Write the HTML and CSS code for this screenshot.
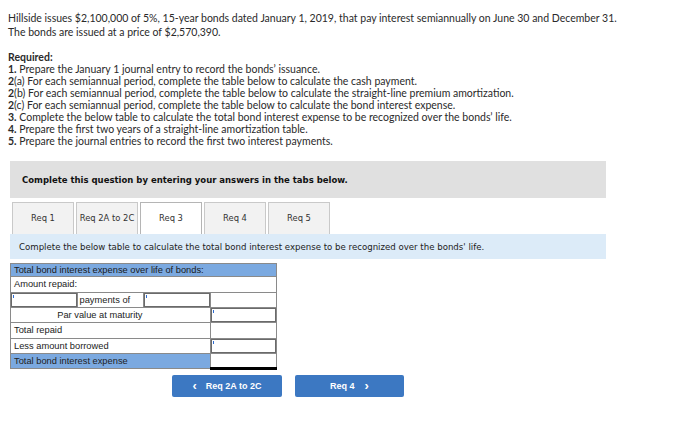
FILE: index.html
```html
<!DOCTYPE html>
<html>
<head>
<meta charset="utf-8">
<link rel="stylesheet" href="styles.css">
</head>
<body>
<div class="page">
  <p class="intro">Hillside issues $2,100,000 of 5%, 15-year bonds dated January 1, 2019, that pay interest semiannually on June 30 and December 31.<br>The bonds are issued at a price of $2,570,390.</p>
  <div class="req">
    <div class="req-title">Required:</div>
    <div><b>1.</b> Prepare the January 1 journal entry to record the bonds’ issuance.</div>
    <div><b>2</b>(a) For each semiannual period, complete the table below to calculate the cash payment.</div>
    <div><b>2</b>(b) For each semiannual period, complete the table below to calculate the straight-line premium amortization.</div>
    <div><b>2</b>(c) For each semiannual period, complete the table below to calculate the bond interest expense.</div>
    <div><b>3.</b> Complete the below table to calculate the total bond interest expense to be recognized over the bonds’ life.</div>
    <div><b>4.</b> Prepare the first two years of a straight-line amortization table.</div>
    <div><b>5.</b> Prepare the journal entries to record the first two interest payments.</div>
  </div>

  <div class="instr">Complete this question by entering your answers in the tabs below.</div>

  <div class="tabs">
    <div class="tab">Req 1</div>
    <div class="tab">Req 2A to 2C</div>
    <div class="tab active">Req 3</div>
    <div class="tab">Req 4</div>
    <div class="tab">Req 5</div>
  </div>
  <div class="info">Complete the below table to calculate the total bond interest expense to be recognized over the bonds' life.</div>

  <table class="grid">
    <tr class="hdr"><td colspan="4">Total bond interest expense over life of bonds:</td></tr>
    <tr class="tall"><td colspan="4">Amount repaid:</td></tr>
    <tr>
      <td class="inp"><span class="box"></span></td>
      <td class="mid">payments of</td>
      <td class="inp"><span class="box"></span></td>
      <td class="val"></td>
    </tr>
    <tr>
      <td colspan="2" class="right">Par value at maturity</td>
      <td class="blank"></td>
      <td class="inp"><span class="box"></span></td>
    </tr>
    <tr class="tall"><td colspan="3">Total repaid</td><td class="val sum"></td></tr>
    <tr><td colspan="3">Less amount borrowed</td><td class="inp"><span class="box"></span></td></tr>
    <tr class="total"><td colspan="3">Total bond interest expense</td><td class="val grand"></td></tr>
  </table>

  <div class="nav">
    <button class="btn prev"><span class="chev">&lsaquo;</span>Req 2A to 2C</button>
    <button class="btn next">Req 4<span class="chev">&rsaquo;</span></button>
  </div>
</div>
</body>
</html>
```
FILE: styles.css
```css
* { box-sizing: border-box; }
body { margin: 0; background: #fff; }
.page {
  padding: 11px 0 0 8px;
  font-family: Lato, "Open Sans", sans-serif;
  color: #2a2a2a;
}
.intro {
  margin: 0;
  font-size: 10.5px;
  line-height: 14px;
}
.req {
  margin-top: 12px;
  font-size: 10.5px;
  line-height: 12px;
}
.req-title { font-weight: bold; }
.req b { font-weight: bold; }

.instr {
  margin: 14px 0 0 2px;
  width: 596px;
  height: 37px;
  background: #e0e0e0;
  font-family: "DejaVu Sans", Verdana, sans-serif;
  font-weight: bold;
  font-size: 8.5px;
  color: #111;
  display: flex;
  align-items: center;
  padding-left: 12px;
}
.tabs {
  margin: 4px 0 0 4px;
  display: flex;
  gap: 2px;
  height: 32px;
}
.tab {
  width: 62px;
  border: 1px solid #c9c9c9;
  border-bottom: none;
  background: #f2f2f2;
  font-family: "DejaVu Sans", Verdana, sans-serif;
  font-size: 8.4px;
  color: #333;
  display: flex;
  align-items: center;
  justify-content: center;
  padding-bottom: 1px;
}
.tab.active { background: #fff; border-color: #b5b5b5; }
.info {
  margin-left: 2px;
  width: 596px;
  height: 25px;
  background: #dcebf8;
  font-family: "DejaVu Sans", Verdana, sans-serif;
  font-size: 8.6px;
  color: #222;
  display: flex;
  align-items: center;
  padding-left: 9px;
}

.grid {
  margin: 4px 0 0 2px;
  border-collapse: collapse;
  width: 267px;
  font-family: "Liberation Sans", Arial, sans-serif;
  font-size: 9.3px;
  color: #222;
  table-layout: fixed;
}
.grid td {
  border: 1px solid #8a8a8a;
  height: 15px;
  line-height: 13px;
  padding: 0 3px;
  white-space: nowrap;
}
.grid tr.tall td { height: 16px; }
.grid td:nth-child(1) { width: 67px; }
.grid .hdr td {
  background: #7ba9e0;
  height: 13px;
  line-height: 11px;
  color: #1a1a1a;
}
.grid .total td { background: #7ba9e0; }
.grid .total td.grand {
  background: #fff;
  border-top: 1px solid #000;
  border-bottom: 3px solid #000;
}
.grid td.mid { padding-left: 2px; }
.grid td.right { text-align: right; padding-right: 1px; border-right: none; }
.grid td.blank { border-left: none; border-right: 1px solid #8a8a8a; }
.grid td.sum { border-top: 1px solid #111; }
.grid td.inp {
  padding: 0;
  position: relative;
}
.grid td.inp .box {
  display: block;
  height: 14px;
  border: 1px solid #6a6a6a;
  position: relative;
  background: #fff;
}
.grid td.inp .box::before {
  content: "";
  position: absolute;
  left: 1px;
  top: 1px;
  width: 1px;
  height: 3px;
  background: #2d6bd0;
}

.nav {
  margin: 5px 0 0 164px;
  display: flex;
  gap: 13px;
}
.btn {
  height: 22px;
  border: none;
  border-radius: 2px;
  background: #3c78c2;
  color: #fff;
  font-family: "Liberation Sans", Arial, sans-serif;
  font-weight: bold;
  font-size: 9px;
  display: flex;
  align-items: center;
  justify-content: center;
  padding: 0;
}
.btn.prev { width: 110px; }
.btn.next { width: 109px; }
.chev { font-size: 13px; line-height: 1; margin-top: -2px; }
.prev .chev { margin-right: 9px; }
.next .chev { margin-left: 10px; }
```
